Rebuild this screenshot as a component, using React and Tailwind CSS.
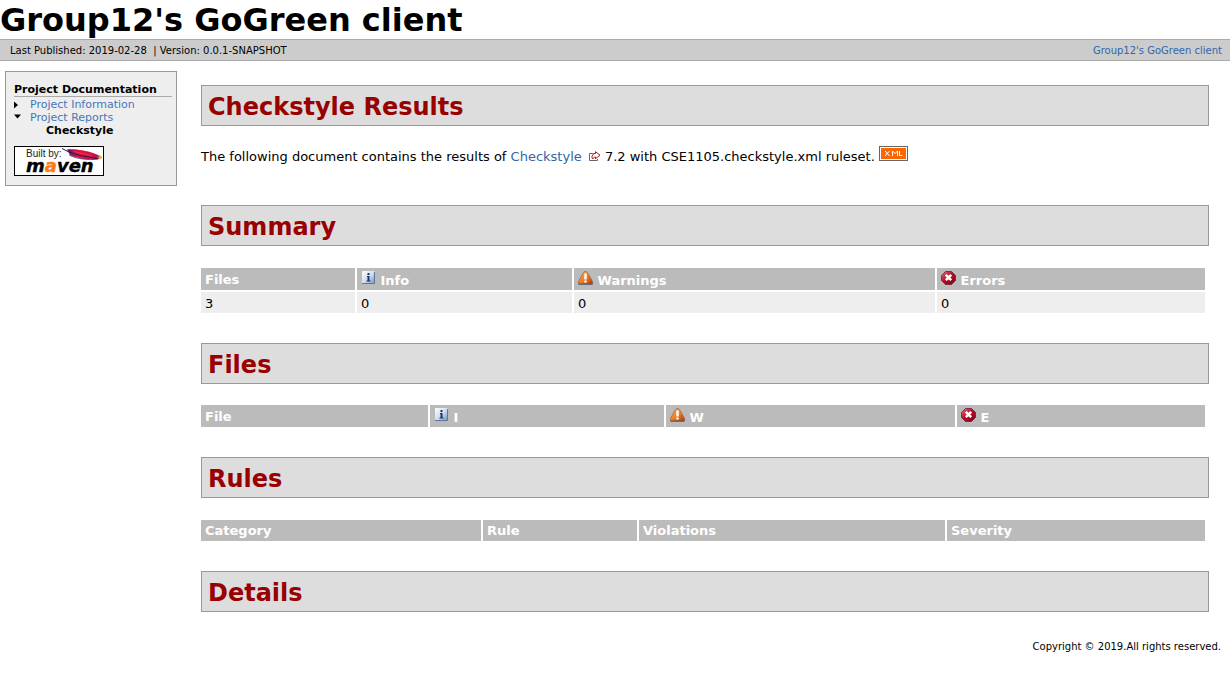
function InfoIcon() {
  return (
    <svg width="15" height="14" viewBox="0 0 15 14" className="inline-block align-baseline" role="img" aria-label="Info icon">
      <defs>
        <linearGradient id="info" x1="0" y1="0" x2="1" y2="1">
          <stop offset="0" stopColor="#ffffff" />
          <stop offset="0.5" stopColor="#d3deed" />
          <stop offset="1" stopColor="#6a8cba" />
        </linearGradient>
      </defs>
      <rect x="1" y="0" width="13" height="13" rx="1" fill="url(#info)" />
      <path d="M1 12.500h12.500V1" stroke="#6078a0" fill="none" />
      <path d="M6.500 2h2v2h-2zM6 5h2.500v4.500h1v1h-4v-1h1V6H6z" fill="#123568" />
    </svg>
  );
}

function WarningIcon() {
  return (
    <svg width="15" height="14" viewBox="0 0 15 14" className="inline-block align-baseline" role="img" aria-label="Warning icon">
      <defs>
        <linearGradient id="warn" x1="0" y1="0" x2="1" y2="1">
          <stop offset="0" stopColor="#ffb35a" />
          <stop offset="0.55" stopColor="#f0781c" />
          <stop offset="1" stopColor="#a83c06" />
        </linearGradient>
      </defs>
      <path d="M6.500 0.500H8.500L11 4 14.500 10.500V13H0.500V10.500L4 4z" fill="url(#warn)" stroke="#8a5a3a" strokeWidth="0.6" />
      <path d="M0.500 13.200h14" stroke="#4c5878" />
      <path d="M6.300 2.500h2.400v6h-2.400zM6.300 9.500h2.400v2h-2.400z" fill="#fff" />
    </svg>
  );
}

function ErrorIcon() {
  return (
    <svg width="15" height="14" viewBox="0 0 15 14" className="inline-block align-baseline" role="img" aria-label="Error icon">
      <defs>
        <linearGradient id="err" x1="0" y1="0" x2="1" y2="1">
          <stop offset="0" stopColor="#ee7585" />
          <stop offset="0.45" stopColor="#b80d28" />
          <stop offset="1" stopColor="#7c0018" />
        </linearGradient>
      </defs>
      <path d="M4.500 0.500h6l4 4v5l-4 4h-6l-4-4v-5z" fill="url(#err)" stroke="#6d2036" strokeWidth="0.8" />
      <path d="M4.800 3.800l5.400 5.400M10.200 3.800L4.800 9.200" stroke="#fff" strokeWidth="2.600" />
    </svg>
  );
}

function ExternalIcon() {
  return (
    <svg width="12" height="10" viewBox="0 0 12 10" className="ml-[7px] inline-block align-baseline" aria-hidden="true">
      <path d="M4.500 2.500H0.500v7h8V8" fill="none" stroke="#666" />
      <path d="M6.500 0.700L11 4.200 6.500 7.700V6H5.500L3.500 8 3 6.500V5L5 2.500h1.500z" fill="#fff" stroke="#900" strokeWidth="0.9" />
    </svg>
  );
}

function XmlBadge() {
  return (
    <svg width="29" height="15" viewBox="0 0 29 15" className="inline-block align-baseline" role="img" aria-label="rss feed">
      <rect x="0.500" y="0.500" width="28" height="14" fill="#fff" stroke="#666" />
      <rect x="2" y="2" width="25" height="11" fill="#f60" />
      <path
        d="M6 5l4.500 5M10.500 5L6 10M13.500 10V5l2.500 2.500L18.500 5v5M20.500 5v4.500h3"
        fill="none"
        stroke="#fff"
        strokeWidth="1"
      />
    </svg>
  );
}

function MavenLogo() {
  return (
    <svg width="90" height="30" viewBox="0 0 90 30" className="block overflow-visible" role="img" aria-label="Built by Maven">
      <defs>
        <linearGradient id="feather" x1="0" x2="1">
          <stop offset="0" stopColor="#3a1450" />
          <stop offset="0.15" stopColor="#a81450" />
          <stop offset="0.4" stopColor="#e0143c" />
          <stop offset="0.85" stopColor="#c01244" />
          <stop offset="1" stopColor="#d8c050" />
        </linearGradient>
      </defs>
      <rect x="0.500" y="0.500" width="89" height="29" fill="#fff" stroke="#000" />
      <text x="12" y="11" fontFamily="Liberation Sans, sans-serif" fontSize="10" fill="#222">Built by:</text>
      <text x="12" y="26" fontFamily="DejaVu Sans, sans-serif" fontWeight="700" fontStyle="italic" fontSize="18" fill="#000" stroke="#000" strokeWidth="0.4">
        m<tspan fill="#ff7a14" stroke="#ff7a14">a</tspan>ven
      </text>
      <path d="M53 3.500C60 2.500 72 4.500 79 7L88 10.500 86.500 13C79 14 65 13.500 56 9z" fill="url(#feather)" />
      <path d="M48 2.500L55 6 66 9.500 83 12.500" stroke="#2c1460" fill="none" />
      <path d="M55 9C64 13.500 74 14 84 13" stroke="#2c1460" strokeWidth="0.7" fill="none" />
      <path d="M60 5.500l18 4" stroke="#f0304c" fill="none" />
      <circle cx="86.500" cy="11.500" r="1.500" fill="#d8c050" />
    </svg>
  );
}

function Heading({ children }) {
  return (
    <h2 className="border border-[#999999] bg-[#dddddd] px-1.5 pt-[7px] pb-[3px] text-2xl leading-[29px] font-bold text-[#990000]">
      {children}
    </h2>
  );
}

function Th({ icon, children }) {
  return (
    <th className="h-[21px] border-r-2 border-white bg-[#bbbbbb] px-1 py-[3px] text-left leading-[13px] font-bold text-white last:border-r-0">
      {icon}
      {icon ? " " : null}
      {children}
    </th>
  );
}

function Td({ children }) {
  return (
    <td className="border-t-2 border-r-2 border-white bg-[#eeeeee] px-1 pt-1 pb-0.5 last:border-r-0">{children}</td>
  );
}

const tableClass = "w-full table-fixed border-separate border-spacing-0 leading-[15px]";

export default function App() {
  return (
    <div className="bg-white font-['DejaVu_Sans',sans-serif] text-[13px] leading-4 text-black">
      <header>
        <h1 className="pt-0.5 text-[32px] leading-[37px] font-bold">Group12's GoGreen client</h1>
        <div className="flex justify-between border-y border-[#aaaaaa] bg-[#cccccc] pt-[5px] pr-2 pb-[3px] pl-2.5 text-[10px] leading-3">
          <div className="whitespace-pre">Last Published: 2019-02-28  | Version: 0.0.1-SNAPSHOT</div>
          <a href="#" className="text-[#3366aa]">Group12's GoGreen client</a>
        </div>
      </header>

      <div className="flex items-start">
        <nav className="mt-2.5 ml-[5px] w-[172px] shrink-0 border border-[#999999] bg-[#eeeeee] pt-[11px] pr-1 pb-[9px] pl-2 text-[11px] leading-[13px]">
          <h5 className="border-b border-[#aaaaaa] font-bold">Project Documentation</h5>
          <ul className="pt-px">
            <li className="flex items-center">
              <svg width="16" height="8" viewBox="0 0 16 8" aria-hidden="true"><path d="M0 0.500L4 4 0 7.500z" /></svg>
              <a href="#" className="text-[#4477bb]">Project Information</a>
            </li>
            <li>
              <div className="flex items-center">
                <svg width="16" height="8" viewBox="0 0 16 8" aria-hidden="true"><path d="M0 0.500h7L3.500 4.500z" /></svg>
                <a href="#" className="text-[#4477bb]">Project Reports</a>
              </div>
              <ul className="pl-8">
                <li className="font-bold">Checkstyle</li>
              </ul>
            </li>
          </ul>
          <a href="#" className="mt-[9px] block w-[90px]"><MavenLogo /></a>
        </nav>

        <main className="mt-6 mr-[21px] ml-6 min-w-0 flex-1">
          <section>
            <Heading>Checkstyle Results</Heading>
            <p className="mt-5 mb-10">
              The following document contains the results of <a href="#" className="text-[#3366aa]">Checkstyle<ExternalIcon /></a>{" "}
              7.2 with CSE1105.checkstyle.xml ruleset. <a href="#"><XmlBadge /></a>
            </p>
          </section>

          <section>
            <Heading>Summary</Heading>
            <div className="mt-[22px] mb-[30px] pr-1">
              <table className={tableClass}>
                <colgroup>
                  <col className="w-[156px]" />
                  <col className="w-[217px]" />
                  <col className="w-[363px]" />
                  <col className="w-[268px]" />
                </colgroup>
                <thead>
                  <tr>
                    <Th>Files</Th>
                    <Th icon={<InfoIcon />}>Info</Th>
                    <Th icon={<WarningIcon />}>Warnings</Th>
                    <Th icon={<ErrorIcon />}>Errors</Th>
                  </tr>
                </thead>
                <tbody>
                  <tr>
                    <Td>3</Td>
                    <Td>0</Td>
                    <Td>0</Td>
                    <Td>0</Td>
                  </tr>
                </tbody>
              </table>
            </div>
          </section>

          <section>
            <Heading>Files</Heading>
            <div className="mt-[21px] mb-[30px] pr-1">
              <table className={tableClass}>
                <colgroup>
                  <col className="w-[229px]" />
                  <col className="w-[236px]" />
                  <col className="w-[291px]" />
                  <col className="w-[248px]" />
                </colgroup>
                <thead>
                  <tr>
                    <Th>File</Th>
                    <Th icon={<InfoIcon />}>I</Th>
                    <Th icon={<WarningIcon />}>W</Th>
                    <Th icon={<ErrorIcon />}>E</Th>
                  </tr>
                </thead>
              </table>
            </div>
          </section>

          <section>
            <Heading>Rules</Heading>
            <div className="mt-[22px] mb-[30px] pr-1">
              <table className={tableClass}>
                <colgroup>
                  <col className="w-[282px]" />
                  <col className="w-[156px]" />
                  <col className="w-[308px]" />
                  <col className="w-[258px]" />
                </colgroup>
                <thead>
                  <tr>
                    <Th>Category</Th>
                    <Th>Rule</Th>
                    <Th>Violations</Th>
                    <Th>Severity</Th>
                  </tr>
                </thead>
              </table>
            </div>
          </section>

          <section>
            <Heading>Details</Heading>
          </section>
        </main>
      </div>

      <footer className="mt-[29px] pr-[9px] text-right text-[10px] leading-3">Copyright © 2019.All rights reserved.</footer>
    </div>
  );
}
